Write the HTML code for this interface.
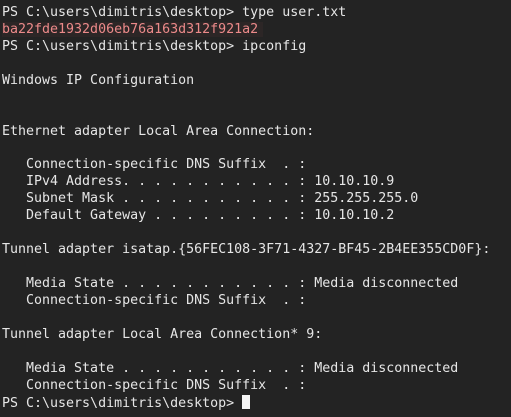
<!DOCTYPE html>
<html><head><meta charset="utf-8"><style>
html,body{margin:0;padding:0;background:#232323;width:511px;height:417px;overflow:hidden}
pre{margin:0;padding:5px 0 0 2px;font-family:"DejaVu Sans Mono","Liberation Mono",monospace;font-size:13.3px;line-height:16.93px;color:#e6e6e6}
.h{color:#ec8a8a;background:#2c2626;padding-right:5px}
.c{display:inline-block;width:8px;height:14px;background:#f5f5f5;vertical-align:-2px}
</style></head><body><pre>PS C:\users\dimitris\desktop&gt; type user.txt
<span class="h">ba22fde1932d06eb76a163d312f921a2</span>
PS C:\users\dimitris\desktop&gt; ipconfig

Windows IP Configuration


Ethernet adapter Local Area Connection:

   Connection-specific DNS Suffix  . :
   IPv4 Address. . . . . . . . . . . : 10.10.10.9
   Subnet Mask . . . . . . . . . . . : 255.255.255.0
   Default Gateway . . . . . . . . . : 10.10.10.2

Tunnel adapter isatap.{56FEC108-3F71-4327-BF45-2B4EE355CD0F}:

   Media State . . . . . . . . . . . : Media disconnected
   Connection-specific DNS Suffix  . :

Tunnel adapter Local Area Connection* 9:

   Media State . . . . . . . . . . . : Media disconnected
   Connection-specific DNS Suffix  . :
PS C:\users\dimitris\desktop&gt; <span class="c"></span></pre></body></html>
